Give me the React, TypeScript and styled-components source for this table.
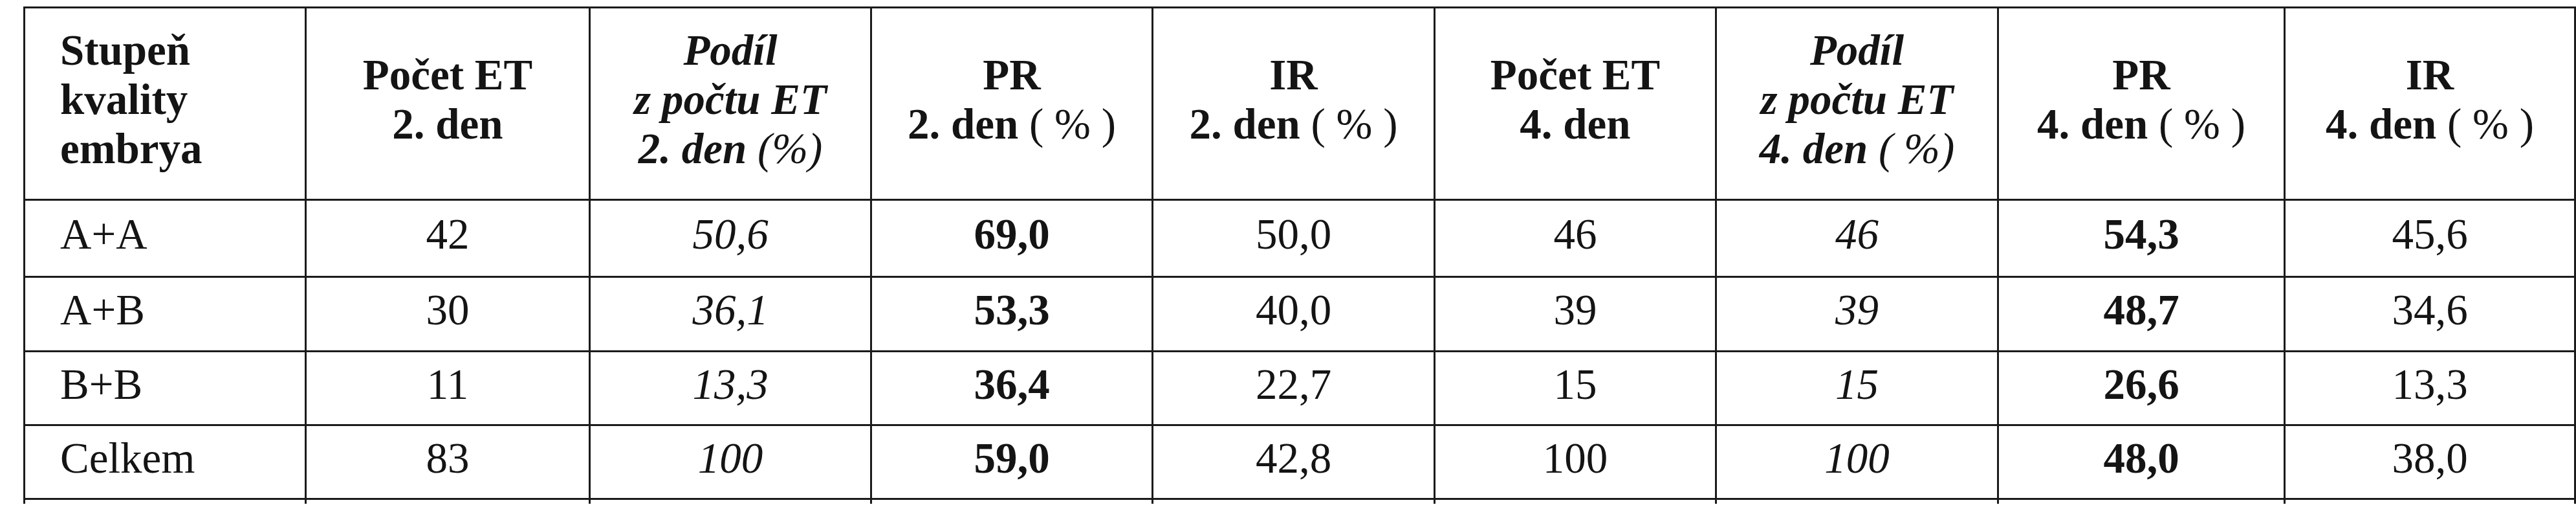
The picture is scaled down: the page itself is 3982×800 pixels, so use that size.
import React, {ReactNode} from 'react';
import styled, {createGlobalStyle} from 'styled-components';

const GlobalStyle = createGlobalStyle`
    html, body {
        margin: 0;
        padding: 0;
        background: #ffffff;
    }
    body {
        width: 3982px;
        font-family: "Liberation Serif", "Times New Roman", serif;
        color: #141414;
    }
`;

type ColumnT = {
    width:number;
    header:ReactNode;
    isLeft?:boolean;
    isBold?:boolean;
    isItalic?:boolean;
};

const LINE = '#1b1b1b';

const Page = styled.div`
    padding: 10px 0 0 36px;
`;

const Table = styled.table`
    border-collapse: collapse;
    table-layout: fixed;
    width: 3943px;
    font-size: 67px;
    line-height: 76px;
`;

const Col = styled.col<{$width:number}>`
    width: ${(p) => p.$width}px;
`;

const HeadCell = styled.th<{$isLeft?:boolean; $isItalic?:boolean}>`
    border: 3px solid ${LINE};
    height: 280px;
    padding: 0 10px 14px ${(p) => (p.$isLeft ? '54px' : '10px')};
    text-align: ${(p) => (p.$isLeft ? 'left' : 'center')};
    vertical-align: middle;
    font-weight: 700;
    font-style: ${(p) => (p.$isItalic ? 'italic' : 'normal')};
    white-space: nowrap;
`;

const Thin = styled.span`
    font-weight: 400;
`;

const BodyRow = styled.tr<{$height:number}>`
    height: ${(p) => p.$height}px;
`;

const BodyCell = styled.td<{$isLeft?:boolean; $isBold?:boolean; $isItalic?:boolean}>`
    border: 3px solid ${LINE};
    padding: 0 10px 14px ${(p) => (p.$isLeft ? '54px' : '10px')};
    text-align: ${(p) => (p.$isLeft ? 'left' : 'center')};
    vertical-align: middle;
    font-weight: ${(p) => (p.$isBold ? 700 : 400)};
    font-style: ${(p) => (p.$isItalic ? 'italic' : 'normal')};
    white-space: nowrap;
`;

const TailCell = styled.td`
    height: 6px;
    padding: 0;
    border-left: 3px solid ${LINE};
    border-right: 3px solid ${LINE};
    border-bottom: none;
`;

const columns:ColumnT[] = [
    {width: 435, isLeft: true, header: <>Stupeň<br/>kvality<br/>embrya</>},
    {width: 439, header: <>Počet ET<br/>2. den</>},
    {width: 435, isItalic: true, header: <>Podíl<br/>z počtu ET<br/>2. den <Thin>(%)</Thin></>},
    {width: 435, isBold: true, header: <>PR<br/>2. den <Thin>( % )</Thin></>},
    {width: 436, header: <>IR<br/>2. den <Thin>( % )</Thin></>},
    {width: 435, header: <>Počet ET<br/>4. den</>},
    {width: 436, isItalic: true, header: <>Podíl<br/>z počtu ET<br/>4. den <Thin>( %)</Thin></>},
    {width: 443, isBold: true, header: <>PR<br/>4. den <Thin>( % )</Thin></>},
    {width: 449, header: <>IR<br/>4. den <Thin>( % )</Thin></>},
];

const rows:{height:number; cells:string[]}[] = [
    {height: 119, cells: ['A+A', '42', '50,6', '69,0', '50,0', '46', '46', '54,3', '45,6']},
    {height: 115, cells: ['A+B', '30', '36,1', '53,3', '40,0', '39', '39', '48,7', '34,6']},
    {height: 114, cells: ['B+B', '11', '13,3', '36,4', '22,7', '15', '15', '26,6', '13,3']},
    {height: 114, cells: ['Celkem', '83', '100', '59,0', '42,8', '100', '100', '48,0', '38,0']},
];

const App = () => (
    <>
        <GlobalStyle/>
        <Page>
            <Table>
                <colgroup>
                    {columns.map((col, idx) => <Col key={idx} $width={col.width}/>)}
                </colgroup>
                <thead>
                    <tr>
                        {columns.map((col, idx) => (
                            <HeadCell key={idx} $isLeft={col.isLeft} $isItalic={col.isItalic}>
                                {col.header}
                            </HeadCell>
                        ))}
                    </tr>
                </thead>
                <tbody>
                    {rows.map((row, rIdx) => (
                        <BodyRow key={rIdx} $height={row.height}>
                            {row.cells.map((value, cIdx) => (
                                <BodyCell
                                    key={cIdx}
                                    $isLeft={columns[cIdx].isLeft}
                                    $isBold={columns[cIdx].isBold}
                                    $isItalic={columns[cIdx].isItalic}>
                                    {value}
                                </BodyCell>
                            ))}
                        </BodyRow>
                    ))}
                    <tr>
                        {columns.map((_, idx) => <TailCell key={idx}/>)}
                    </tr>
                </tbody>
            </Table>
        </Page>
    </>
);

export default App;
